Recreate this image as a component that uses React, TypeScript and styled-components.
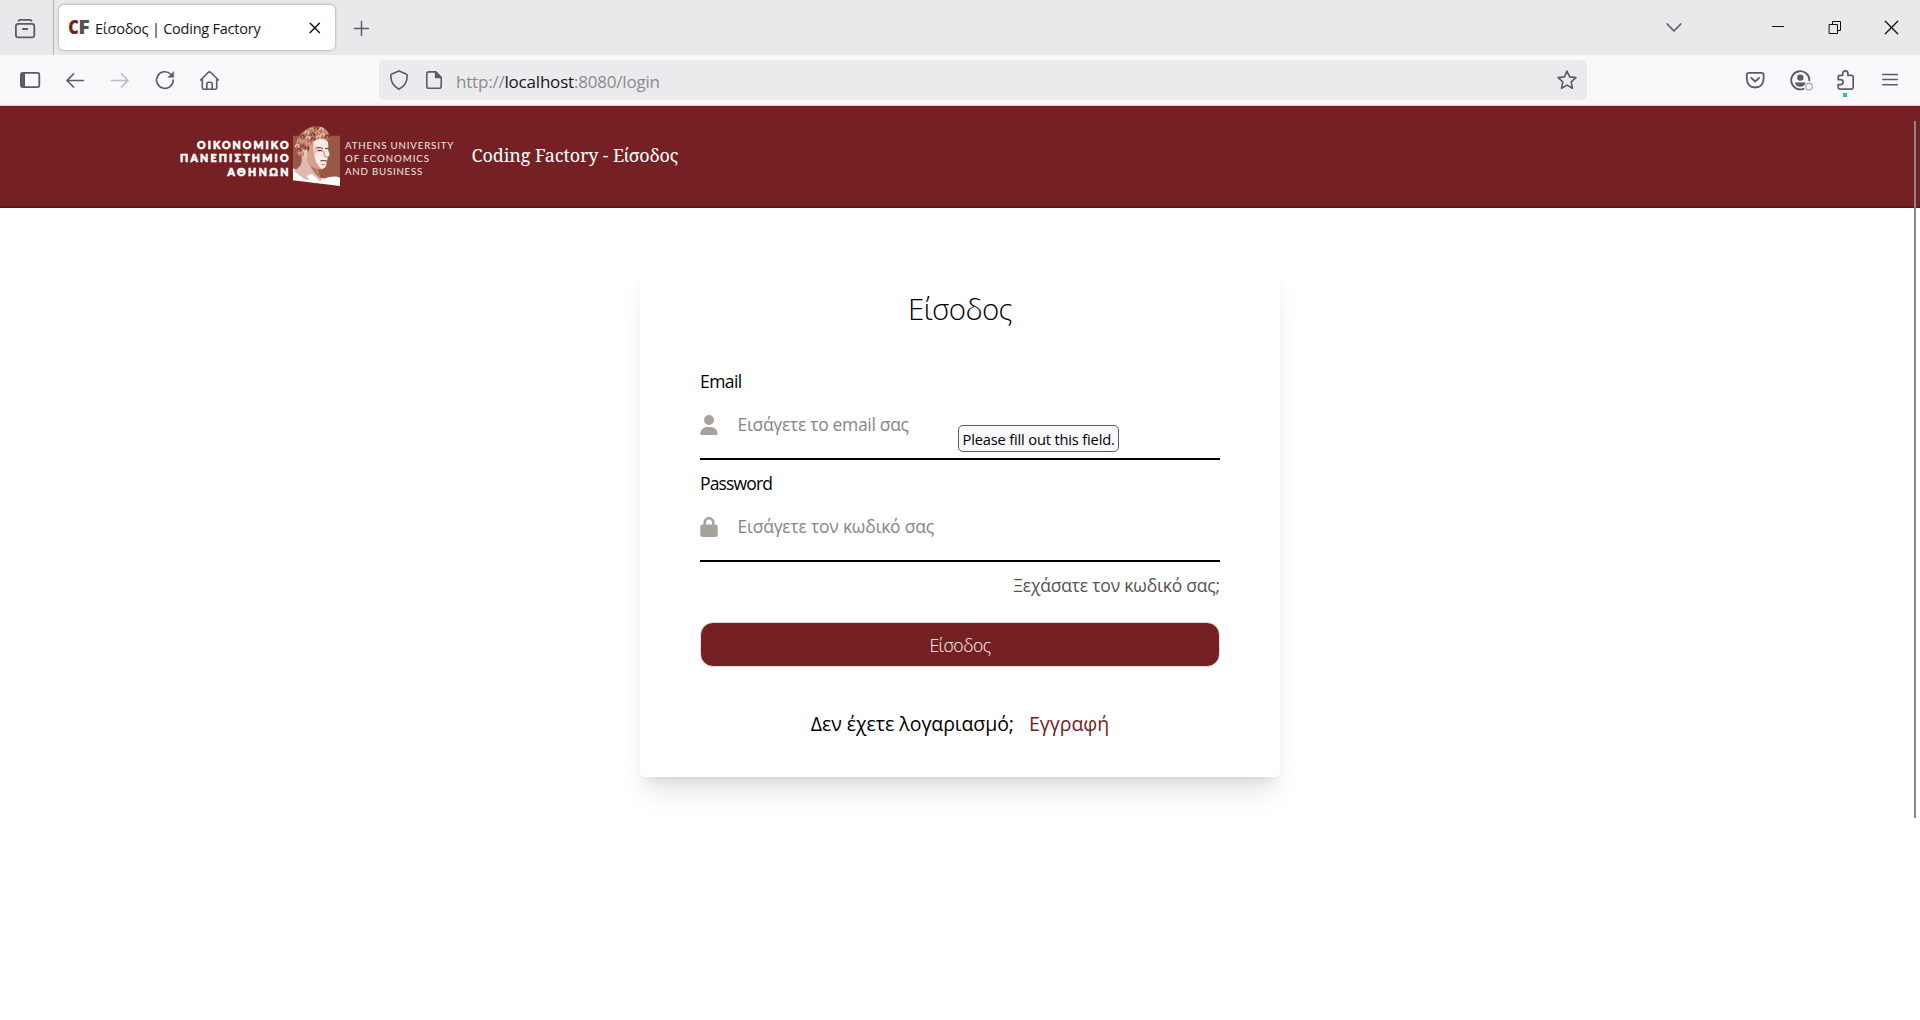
import React from "react";
import styled, { createGlobalStyle } from "styled-components";
import { FaUser, FaLock } from "react-icons/fa6";

const MAROON = "#752124";
const INK = "#5b5b66";

const Global = createGlobalStyle`
  *, *::before, *::after { box-sizing: border-box; }
  body { margin: 0; background: #fff; font-family: "Open Sans", "Noto Sans", sans-serif; color: #000; }
`;

const Screen = styled.div`
  position: relative;
  display: flex;
  flex-direction: column;
  width: 1920px;
  height: 1020px;
  overflow: hidden;
`;

const Text = styled.span<{ $size: number; $track?: number; $weight?: number; $color?: string }>`
  font-size: ${(p) => p.$size}px;
  letter-spacing: ${(p) => p.$track ?? 0}px;
  font-weight: ${(p) => p.$weight ?? 400};
  color: ${(p) => p.$color ?? "#000"};
  line-height: 24px;
  white-space: nowrap;
`;

/* Browser chrome */
const TabStrip = styled.div`
  display: flex;
  height: 55px;
  padding: 0 17px 0 13px;
  background: #e9e9eb;
`;

const StripCell = styled.div<{ $left?: number; $top?: number }>`
  display: flex;
  margin-left: ${(p) => p.$left ?? 0}px;
  padding-top: ${(p) => p.$top ?? 15}px;
`;

const Divider = styled.div`
  width: 1px;
  margin: 0 5px 0 16px;
  background: #b4b4ba;
`;

const Tab = styled.div`
  display: flex;
  align-items: center;
  width: 276px;
  height: 45px;
  margin-top: 5px;
  padding: 0 8px 0 9px;
  border-radius: 5px;
  background: #fff;
  box-shadow: 0 0 3px rgba(0, 0, 0, 0.38);
`;

const TabTitle = styled(Text)`
  flex: 1;
  padding: 2px 0 0 5px;
`;

const WindowControls = styled.div`
  display: flex;
  margin-left: auto;
  padding-top: 15px;
`;

const ControlGap = styled.div<{ $w: number }>`
  width: ${(p) => p.$w}px;
`;

const Toolbar = styled.div`
  display: flex;
  align-items: center;
  height: 51px;
  padding: 0 18px;
  background: #f9f9fb;
  border-bottom: 1px solid #d2d2d6;
`;

const IconRow = styled.div`
  display: flex;
  gap: 21px;
`;

const UrlBar = styled.div`
  display: flex;
  align-items: center;
  width: 1208px;
  height: 40px;
  margin: 0 auto 0 157px;
  padding: 0 8px;
  border-radius: 5px;
  background: #ebebed;
`;

const UrlIcons = styled.div`
  display: flex;
  gap: 11px;
  margin-right: 10px;
`;

const UrlText = styled(Text)`
  flex: 1;
  padding-top: 3px;
`;

const Host = styled.span`
  color: #15141a;
`;

const Glyph = styled.svg<{ $color?: string; $w?: number }>`
  display: block;
  flex: none;
  width: 24px;
  height: 24px;
  overflow: visible;
  fill: none;
  stroke: ${(p) => p.$color ?? INK};
  stroke-width: ${(p) => p.$w ?? 1.6};
  stroke-linecap: round;
  stroke-linejoin: round;
`;

const Favicon = styled.svg`
  display: block;
  flex: none;
  width: 22px;
  height: 24px;
`;

/* Page */
const PageHeader = styled.header`
  display: flex;
  align-items: center;
  gap: 15.5px;
  height: 102px;
  padding-left: 176px;
  background: ${MAROON};
  border-bottom: 2px solid #5c191c;
`;

const Logo = styled.svg`
  display: block;
  width: 280px;
  height: 70px;
`;

const HeaderTitle = styled.h1`
  margin: 0;
  font: 400 18px/24px "Noto Serif", "Liberation Serif", serif;
  letter-spacing: -0.12px;
  color: #fff;
  padding-bottom: 2px;
`;

const Main = styled.main`
  display: flex;
  justify-content: center;
  align-items: flex-start;
  flex: 1;
  padding-top: 59px;
`;

const Card = styled.form`
  display: flex;
  flex-direction: column;
  width: 640px;
  height: 510px;
  padding: 22px 60px 0;
  border-radius: 5px;
  background: #fff;
  box-shadow: 0 20px 25px -5px rgba(0, 0, 0, 0.1), 0 8px 10px -6px rgba(0, 0, 0, 0.1);
`;

const CardTitle = styled.h2`
  margin: 0 0 40px;
  text-align: center;
  font-size: 29.5px;
  font-weight: 300;
  letter-spacing: -0.65px;
  line-height: 40px;
`;

const Field = styled.div`
  position: relative;
  display: flex;
  flex-direction: column;
  height: 91px;
  margin-bottom: 11px;
  border-bottom: 2px solid #000;
`;

const InputRow = styled.div`
  display: flex;
  align-items: center;
  gap: 19.5px;
  height: 24px;
  margin-top: 19px;
  color: #a8a29e;

  svg {
    width: 18px;
    height: 20px;
    margin-top: 1px;
  }
`;

const Tooltip = styled.div`
  position: absolute;
  left: 258px;
  top: 56px;
  display: flex;
  width: 161px;
  height: 27px;
  padding: 1px 0 0 3.5px;
  border: 1px solid ${INK};
  border-radius: 5px;
  background: #f9f9fb;
`;

const Forgot = styled(Text)`
  align-self: flex-end;
`;

const Submit = styled.button`
  height: 45px;
  margin: 25px 0 0;
  padding: 1px 0 0;
  border: 1px solid #e2dcda;
  border-radius: 13px;
  background: ${MAROON};
  color: #fff;
  font-family: inherit;
`;

const Register = styled.div`
  display: flex;
  justify-content: center;
  gap: 15px;
  margin-top: 45px;
`;

const ScrollThumb = styled.div`
  position: absolute;
  right: 4px;
  top: 121px;
  width: 2px;
  height: 697px;
  background: #8a8688;
`;

const CURLS = [
  [416, 150], [411, 138], [417, 124], [427, 110], [440, 98], [454, 89], [469, 84], [484, 88],
  [495, 98], [501, 110], [487, 105], [472, 99], [458, 104], [444, 114], [432, 126], [427, 140],
  [434, 153], [444, 133], [458, 118], [475, 112], [421, 161], [440, 146],
];

const CURL_TONES = ["#7d3529", "#ecd0c4", "#d9a897"];

function Portrait() {
  return (
    <g transform="translate(-16 -21) scale(0.33333)" fill="none">
      <path d="M399 107H540V257L399 241Z" fill="#9b5745" />
      <path d="M399 205Q414 215 428 214L462 228Q490 240 505 232Q528 226 540 233V258L399 241Z" fill="#fff" />
      <path d="M422 160Q430 184 420 198Q410 210 401 212L432 236L478 248L486 238Q472 224 474 205L440 160Z" fill="#dfb9ab" />
      <path d="M446 186Q452 206 466 222L484 238Q474 222 478 205Z" fill="#b97963" />
      <path d="M440 228L456 222L486 250L452 246Z" fill="#fff" />
      <path d="M440 150Q446 122 470 112Q494 110 503 124Q507 136 504 148L509 164Q509 169 502 170L503 178L499 184L500 190Q498 206 484 208Q462 206 445 188Z" fill="#f8ebe5" />
      <path d="M438 150Q446 126 462 128Q458 142 462 158Q464 190 486 208Q462 208 444 190Q436 170 438 150Z" fill="#d3a08e" />
      <path d="M462 140Q472 138 480 141L478 154Q468 156 464 166Q460 156 462 140Z" fill="#e6c5b8" />
      <path d="M470 144Q480 140 489 146M495 146L504 145" stroke="#8f4636" strokeWidth="3.4" />
      <path d="M474 153Q481 149 487 154" stroke="#7d3529" strokeWidth="4" />
      <path d="M492 152L493 167L500 172" stroke="#d3a08e" strokeWidth="4" />
      <path d="M481 183Q490 180 500 183" stroke="#7d3529" strokeWidth="3.6" />
      <path d="M484 193Q489 195 495 192" stroke="#c48b77" strokeWidth="3.4" />
      <path d="M410 160Q402 130 416 110Q434 82 466 78Q498 78 508 104Q509 118 503 126Q492 112 474 118Q454 124 449 142Q447 158 440 163Q426 174 410 160Z" fill="#b87562" />
      <path d="M432 152Q442 148 443 160Q444 174 436 178Q430 170 432 152Z" fill="#e6c5b8" />
      {CURLS.map(([x, y], i) => (
        <path
          key={i}
          d={`M${x - 5} ${y + 4}q0 -10 8 -8q6 3 0 8`}
          stroke={CURL_TONES[i % 3]}
          strokeWidth="3.4"
        />
      ))}
    </g>
  );
}

function UniversityLogo() {
  return (
    <Logo viewBox="0 0 280 70">
      <g
        fill="#fff"
        stroke="#fff"
        strokeWidth="0.6"
        fontFamily="Lato, 'Open Sans', sans-serif"
        fontWeight={900}
        fontSize="10.6"
      >
        <text x="21" y="27.9" textLength="91.5">ΟΙΚΟΝΟΜΙΚΟ</text>
        <text x="4" y="41.2" textLength="108.5">ΠΑΝΕΠΙΣΤΗΜΙΟ</text>
        <text x="51.5" y="54.6" textLength="61">ΑΘΗΝΩΝ</text>
      </g>
      <g fill="#f3e6e4" fontFamily="Lato, 'Open Sans', sans-serif" fontSize="9.7">
        <text x="169" y="28" textLength="108.3">ATHENS UNIVERSITY</text>
        <text x="169" y="41" textLength="84">OF ECONOMICS</text>
        <text x="169" y="54" textLength="77.3">AND BUSINESS</text>
      </g>
      <Portrait />
    </Logo>
  );
}

export default function App() {
  return (
    <Screen>
      <Global />
      <TabStrip>
        <StripCell $top={16}>
          <Glyph viewBox="0 0 24 24" $w={1.8}>
            <path d="M5.5 4.8Q6 3.8 7.5 3.8H16.5Q18 3.8 18.5 4.8" />
            <rect x="2.9" y="7.9" width="18.4" height="13.4" rx="2.4" />
            <path d="M9.8 13H14.2" />
          </Glyph>
        </StripCell>
        <Divider />
        <Tab>
          <Favicon viewBox="0 0 22 24">
            <g fontFamily="'Open Sans', sans-serif" fontWeight={800} fontSize="18.5">
              <text x="0.2" y="18" textLength="10.5" lengthAdjust="spacingAndGlyphs" fill={MAROON}>C</text>
              <text x="10.3" y="18" textLength="11.5" lengthAdjust="spacingAndGlyphs" fill="#57504f">F</text>
            </g>
          </Favicon>
          <TabTitle $size={14.5} $track={-0.23} $color="#15141a">Είσοδος | Coding Factory</TabTitle>
          <Glyph viewBox="0 0 24 24" $color="#15141a" $w={1.5}>
            <path d="M7.2 7.2L16.4 16.6M16.4 7.2L7.2 16.6" />
          </Glyph>
        </Tab>
        <StripCell $left={15} $top={16}>
          <Glyph viewBox="0 0 24 24" $w={1.5}>
            <path d="M4.5 12.5H18.5M11.5 5.5V19.5" />
          </Glyph>
        </StripCell>
        <WindowControls>
          <Glyph viewBox="0 0 24 24" $w={1.7}>
            <path d="M5.2 9L12 16L18.8 9" />
          </Glyph>
          <ControlGap $w={80} />
          <Glyph viewBox="0 0 24 24" $color="#111" $w={1}>
            <path d="M6.5 11.5H17.5" />
          </Glyph>
          <ControlGap $w={33} />
          <Glyph viewBox="0 0 24 24" $color="#111" $w={1}>
            <path d="M6.5 9.5H14.5V18.5H6.5ZM9.5 9.5V6.5H17.5V15.5H14.5" />
          </Glyph>
          <ControlGap $w={32} />
          <Glyph viewBox="0 0 24 24" $color="#111" $w={1.3}>
            <path d="M6.3 6.3L18.7 18.7M18.7 6.3L6.3 18.7" />
          </Glyph>
        </WindowControls>
      </TabStrip>

      <Toolbar>
        <IconRow>
          <Glyph viewBox="0 0 24 24" $w={1.8}>
            <rect x="2.9" y="4.9" width="18.4" height="14.2" rx="1.8" />
            <path d="M3 5H7V19H3Z" fill={INK} stroke="none" />
          </Glyph>
          <Glyph viewBox="0 0 24 24" $w={1.7}>
            <path d="M20.3 12.5H4M10.5 6L4 12.5L10.5 19" />
          </Glyph>
          <Glyph viewBox="0 0 24 24" $w={1.7} $color="#bcbcc2">
            <path d="M3.7 12.5H20M13.5 6L20 12.5L13.5 19" />
          </Glyph>
          <Glyph viewBox="0 0 24 24">
            <path d="M20.2 12A8.3 8.3 0 1 1 17.6 6" />
            <path d="M20.7 3.8V9.3H15.2Z" fill={INK} stroke={INK} strokeWidth="0.5" />
          </Glyph>
          <Glyph viewBox="0 0 24 24">
            <path d="M2.6 12L10.4 4.3Q11.5 3.3 12.6 4.3L20.4 12M4.3 11V19.8Q4.3 21.3 5.8 21.3H17.2Q18.7 21.3 18.7 19.8V11" />
            <path d="M8.8 21V16Q8.8 14.3 10.5 14.3H12.5Q14.2 14.3 14.2 16V21" />
          </Glyph>
        </IconRow>
        <UrlBar>
          <UrlIcons>
            <Glyph viewBox="0 0 24 24">
              <path d="M12 2.9L19.2 6Q20.2 6.5 20.2 7.6Q20.4 17 12 21.3Q3.6 17 3.8 7.6Q3.8 6.5 4.8 6Z" />
            </Glyph>
            <Glyph viewBox="0 0 24 24">
              <path d="M6.8 3.9H13.6L19.2 9.5V18.2Q19.2 20.2 17.2 20.2H6.8Q4.8 20.2 4.8 18.2V5.9Q4.8 3.9 6.8 3.9Z" />
              <path d="M13.6 3.9V9.5H19.2Z" fill={INK} />
            </Glyph>
          </UrlIcons>
          <UrlText $size={17} $track={-0.2} $color="#8a8a90">
            http://<Host>localhost</Host>:8080/login
          </UrlText>
          <Glyph viewBox="0 0 24 24">
            <path d="M12 3.2L14.6 8.9L20.9 9.6L16.2 13.9L17.5 20.3L12 17.1L6.5 20.3L7.8 13.9L3.1 9.6L9.4 8.9Z" />
          </Glyph>
        </UrlBar>
        <IconRow>
          <Glyph viewBox="0 0 24 24" $w={1.8}>
            <path d="M5.8 4.9H18.6Q20.6 4.9 20.6 6.9V11Q20 19.2 12.2 19.5Q4.4 19.2 3.8 11V6.9Q3.8 4.9 5.8 4.9Z" />
            <path d="M8.2 9.8L12.2 13.5L16.2 9.8" />
          </Glyph>
          <Glyph viewBox="0 0 24 24" $w={1.9}>
            <path d="M21.4 12.4A9.1 9.1 0 1 0 15.5 20.8" />
            <circle cx="12.3" cy="9.6" r="3.2" fill={INK} stroke="none" />
            <path d="M6.8 14.5H17.6Q16.5 18.7 12.2 18.7Q7.9 18.7 6.8 14.5Z" fill={INK} stroke="none" />
            <circle cx="21" cy="18.5" r="3.3" fill="#f9f9fb" stroke="#b1b1b6" strokeWidth="1.4" />
          </Glyph>
          <Glyph viewBox="0 0 24 24" $w={1.7}>
            <path d="M9.7 7.3V5.5a2.6 2.6 0 0 1 5.2 0V7.3H18.6a1.6 1.6 0 0 1 1.6 1.6V19.6a1.6 1.6 0 0 1-1.6 1.6H6.8a1.6 1.6 0 0 1-1.6-1.6V16.6H7.6a2.5 2.5 0 0 0 0-5H5.2V8.9a1.6 1.6 0 0 1 1.6-1.6Z" />
            <path d="M10 25H14V29H10Z" fill="#2ac3a2" stroke="none" />
          </Glyph>
          <Glyph viewBox="0 0 24 24" $w={1.5}>
            <path d="M4.7 6.5H19.3M4.7 11.5H19.3M4.7 16.8H19.3" />
          </Glyph>
        </IconRow>
      </Toolbar>

      <PageHeader>
        <UniversityLogo />
        <HeaderTitle>Coding Factory - Είσοδος</HeaderTitle>
      </PageHeader>

      <Main>
        <Card>
          <CardTitle>Είσοδος</CardTitle>
          <Field>
            <Text $size={17.5} $track={-0.55}>Email</Text>
            <InputRow>
              <FaUser />
              <Text $size={17.5} $track={-0.32} $color="#858585">Εισάγετε το email σας</Text>
            </InputRow>
            <Tooltip>
              <Text $size={14.7} $track={-0.18}>Please fill out this field.</Text>
            </Tooltip>
          </Field>
          <Field>
            <Text $size={17.5} $track={-0.85}>Password</Text>
            <InputRow>
              <FaLock />
              <Text $size={17.5} $track={-0.23} $color="#858585">Εισάγετε τον κωδικό σας</Text>
            </InputRow>
          </Field>
          <Forgot $size={17.5} $track={-0.2} $color="#57534e">Ξεχάσατε τον κωδικό σας;</Forgot>
          <Submit type="button">
            <Text $size={17.5} $track={-0.45} $weight={300} $color="#fff">Είσοδος</Text>
          </Submit>
          <Register>
            <Text $size={19.5} $track={-0.05}>Δεν έχετε λογαριασμό;</Text>
            <Text $size={19.5} $color={MAROON}>Εγγραφή</Text>
          </Register>
        </Card>
      </Main>
      <ScrollThumb />
    </Screen>
  );
}
